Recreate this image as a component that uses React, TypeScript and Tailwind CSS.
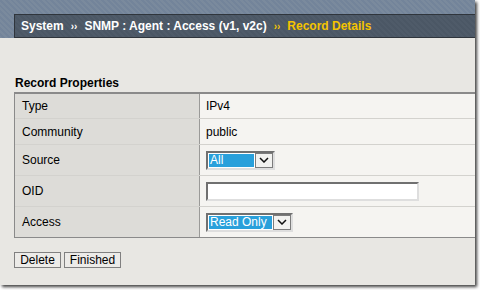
import React from 'react';

const Chevron: React.FC = () => (
  <svg width="10" height="6" viewBox="0 0 10 6" fill="none">
    <path d="M1 1 L5 5 L9 1" stroke="#111" strokeWidth="1.5" />
  </svg>
);

const FakeSelect: React.FC<{ value: string; width: string }> = ({ value, width }) => (
  <div className={`flex h-[19px] ${width} border-2 border-t-[#707070] border-l-[#707070] border-r-[#dedede] border-b-[#dedede] bg-white`}>
    <div className="m-px flex-1 bg-[#29a0db] pl-px text-[12px] leading-[13px] text-white">{value}</div>
    <div className="flex w-[18px] items-center justify-center border border-[#7c7c7c] bg-[#f2f2f0]">
      <Chevron />
    </div>
  </div>
);

const rows: { label: string; h: string; value: React.ReactNode }[] = [
  { label: 'Type', h: 'h-[24px]', value: 'IPv4' },
  { label: 'Community', h: 'h-[26px]', value: 'public' },
  { label: 'Source', h: 'h-[31px]', value: <FakeSelect value="All" width="w-[69px]" /> },
  {
    label: 'OID',
    h: 'h-[31px]',
    value: (
      <div className="h-[19px] w-[213px] border-2 border-t-[#707070] border-l-[#707070] border-r-[#dedede] border-b-[#dedede] bg-white" />
    ),
  },
  { label: 'Access', h: 'h-[31px]', value: <FakeSelect value="Read Only" width="w-[87px]" /> },
];

const App: React.FC = () => {
  return (
    <div className="h-[290px] w-[480px] overflow-hidden bg-white font-['Liberation_Sans',Arial,sans-serif]">
      <div className="h-[285px] w-[475px] overflow-hidden bg-[#e8e7e3] shadow-[2px_2px_3px_rgba(0,0,0,0.75)]">
        <div className="bg-[repeating-linear-gradient(45deg,#7a8a9d_0px,#7a8a9d_2px,#73849a_2px,#73849a_4px)] pl-[14px] pt-[14px]">
          <div className="flex h-[24px] items-center gap-[7px] border border-r-0 border-[#2f353c] bg-[repeating-linear-gradient(45deg,#4f5b69_0px,#4f5b69_2px,#4b5765_2px,#4b5765_4px)] pl-[6px] text-[12px] font-bold text-white">
            <span>System</span>
            <span className="text-[10px]">››</span>
            <span>SNMP : Agent : Access (v1, v2c)</span>
            <span className="text-[10px] text-[#f5c400]">››</span>
            <span className="text-[#f5c400]">Record Details</span>
          </div>
        </div>

        <div className="pl-[14px] pt-[37px]">
          <div className="pl-px text-[12px] font-bold leading-[16px] text-black">Record Properties</div>
          <div className="mt-px border-t-2 border-l border-b border-[#8a8a8a] text-[12px] text-black">
            {rows.map((r, i) => (
              <div key={r.label} className={`flex ${r.h} ${i > 0 ? 'border-t border-[#d3d2ce]' : ''}`}>
                <div className="flex w-[185px] items-center border-r border-[#9a9a98] bg-[#dddcd8] pl-[7px]">{r.label}</div>
                <div className="flex flex-1 items-center bg-[#f5f4f1] pl-[6px]">{r.value}</div>
              </div>
            ))}
          </div>

          <div className="mt-[14px] flex gap-[3px] text-[12px] text-black">
            <button className="h-[16px] w-[47px] border border-[#808080] bg-[#ecebe8] leading-[13px]">Delete</button>
            <button className="h-[16px] w-[57px] border border-[#808080] bg-[#ecebe8] leading-[13px]">Finished</button>
          </div>
        </div>
      </div>
    </div>
  );
};

export default App;
